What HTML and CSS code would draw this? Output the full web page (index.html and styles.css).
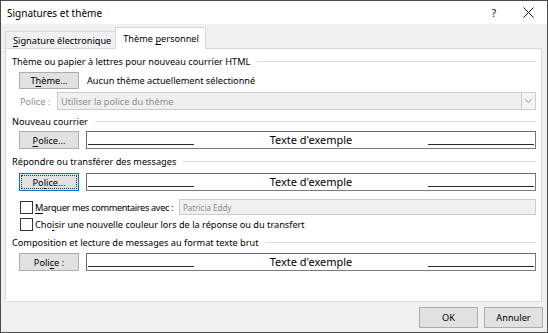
FILE: index.html
```html
<!DOCTYPE html>
<html lang="fr">

<head>
  <meta charset="UTF-8">
  <meta name="viewport" content="width=device-width, initial-scale=1.0">
  <title>Signatures et thème</title>
  <link rel="stylesheet" href="styles.css">
</head>

<body>
  <div class="window">
    <div class="titlebar">
      <span class="title">Signatures et thème</span>
      <span class="title-help">?</span>
      <span class="title-close">
        <svg width="11" height="11" viewBox="0 0 11 11">
          <path d="M0.5 0.5 L10.5 10.5 M10.5 0.5 L0.5 10.5" stroke="#111" stroke-width="1" fill="none" />
        </svg>
      </span>
    </div>

    <div class="tabs">
      <div class="tab"><span><u>S</u>ignature électronique</span></div>
      <div class="tab active"><span>Thème <u>p</u>ersonnel</span></div>
    </div>

    <div class="panel">
      <div class="heading h1"><span>Thème ou papier à lettres pour nouveau courrier HTML</span></div>
      <div class="row row-theme">
        <button class="btn"><span>T<u>h</u>ème...</span></button>
        <span class="theme-info">Aucun thème actuellement sélectionné</span>
      </div>
      <div class="row row-font">
        <span class="label-disabled">Police :</span>
        <div class="select">
          <span>Utiliser la police du thème</span>
          <span class="select-arrow">
            <svg width="7" height="4" viewBox="0 0 7 4">
              <path d="M0.5 0.5 L3.5 3.5 L6.5 0.5" stroke="#8a8a8a" stroke-width="1" fill="none" />
            </svg>
          </span>
        </div>
      </div>

      <div class="heading h2"><span>Nouveau courrier</span></div>
      <div class="row row-sample">
        <button class="btn"><span><u>P</u>olice...</span></button>
        <div class="sample">
          <span class="sample-line"></span>
          <span class="sample-text">Texte d'exemple</span>
          <span class="sample-line"></span>
        </div>
      </div>

      <div class="heading h3"><span>Répondre ou transférer des messages</span></div>
      <div class="row row-sample row-reply">
        <button class="btn focused"><span class="focus-ring"><span>Po<u>l</u>ice...</span></span></button>
        <div class="sample">
          <span class="sample-line"></span>
          <span class="sample-text">Texte d'exemple</span>
          <span class="sample-line"></span>
        </div>
      </div>

      <div class="row check-row check-mark">
        <span class="checkbox"></span>
        <span class="check-label"><u>M</u>arquer mes commentaires avec :</span>
        <div class="input-disabled">Patricia Eddy</div>
      </div>
      <div class="row check-row check-color">
        <span class="checkbox"></span>
        <span class="check-label">Cho<u>i</u>sir une nouvelle couleur lors de la réponse ou du transfert</span>
      </div>

      <div class="heading h4"><span>Composition et lecture de messages au format texte brut</span></div>
      <div class="row row-sample row-plain">
        <button class="btn"><span>Poli<u>c</u>e :</span></button>
        <div class="sample">
          <span class="sample-line"></span>
          <span class="sample-text">Texte d'exemple</span>
          <span class="sample-line"></span>
        </div>
      </div>
    </div>

    <div class="footer">
      <button class="btn btn-footer">OK</button>
      <button class="btn btn-footer">Annuler</button>
    </div>
  </div>
</body>

</html>
```

FILE: styles.css
```css
* {
  box-sizing: border-box;
}

body {
  margin: 0;
  padding: 0;
  font-family: "Noto Sans", "Open Sans", sans-serif;
  font-size: 9.2px;
  color: #000;
}

u {
  text-decoration-thickness: 1px;
  text-underline-offset: 2px;
}

.window {
  width: 548px;
  height: 333px;
  border: 1px solid #4b4b4b;
  background-color: #f0f0f0;
  display: flex;
  flex-direction: column;
}

.titlebar {
  height: 23px;
  background-color: #fff;
  display: flex;
  align-items: center;
  padding-left: 6px;
}

.title {
  flex: 1;
  font-size: 10px;
}

.title-help {
  width: 30px;
  font-size: 10px;
  text-align: center;
}

.title-close {
  width: 38px;
  display: flex;
  justify-content: center;
}

/* tab strip */
.tabs {
  height: 24px;
  display: flex;
  align-items: flex-end;
  padding-left: 4px;
}

.tab {
  height: 18px;
  padding: 0 4px 0 7px;
  border: 1px solid #d9d9d9;
  border-bottom: none;
  display: flex;
  align-items: center;
  margin-bottom: -1px;
  white-space: nowrap;
}

.tab.active {
  height: 22px;
  background-color: #fff;
  padding: 0 6px 0 7px;
  position: relative;
  z-index: 1;
  margin-left: -1px;
}

.panel {
  margin: 0 5px 0 4px;
  height: 254px;
  background-color: #fff;
  border: 1px solid #d9d9d9;
  padding: 0 5px 0 6px;
}

.heading {
  height: 14px;
  display: flex;
  align-items: center;
  white-space: nowrap;
}

.heading::after {
  content: "";
  flex: 1;
  height: 1px;
  background-color: #dcdcdc;
  margin-left: 7px;
}

.h1 { margin-top: 5px; }
.h2 { margin-top: 4px; }
.h3 { margin-top: 5px; }
.h4 { margin-top: 4px; }

.row {
  display: flex;
  align-items: center;
  padding-left: 7px;
  white-space: nowrap;
}

.btn {
  font-family: inherit;
  font-size: 9.2px;
  color: #000;
  width: 60px;
  height: 17px;
  padding: 0;
  background-color: #e1e1e1;
  border: 1px solid #adadad;
  display: flex;
  justify-content: center;
  align-items: center;
  white-space: nowrap;
}

.btn.focused {
  border-color: #0078d7;
  padding: 1px;
}

.focus-ring {
  width: 100%;
  height: 100%;
  border: 1px dotted #333;
  display: flex;
  justify-content: center;
  align-items: center;
}

.row-theme {
  margin-top: 4px;
  height: 17px;
}

.theme-info {
  margin-left: 8px;
}

.row-font {
  margin-top: 3px;
  height: 18px;
  padding-left: 8px;
}

.label-disabled {
  color: #8d8d8d;
  width: 37px;
}

.select {
  flex: 1;
  height: 18px;
  background-color: #efefef;
  border: 1px solid #cccccc;
  display: flex;
  align-items: center;
  color: #8d8d8d;
  padding-left: 3px;
}

.select span:first-child {
  flex: 1;
}

.select-arrow {
  width: 14px;
  height: 16px;
  border-left: 1px solid #cccccc;
  display: flex;
  justify-content: center;
  align-items: center;
  background-color: #f4f4f4;
}

.row-sample {
  margin-top: 3px;
  height: 18px;
}

.row-reply {
  margin-top: 5px;
}

.row-plain {
  margin-top: 4px;
}

.row-sample .btn {
  height: 18px;
}

.sample {
  flex: 1;
  margin-left: 7px;
  height: 18px;
  border: 1px solid #7a7a7a;
  border-top-color: #6a6a6a;
  border-left-color: #6a6a6a;
  background-color: #fff;
  display: flex;
  justify-content: space-between;
  align-items: flex-end;
  padding: 0 1px 3px 1px;
}

.sample-line {
  width: 106px;
  height: 1px;
  background-color: #2b2b2b;
}

.sample-text {
  font-size: 11px;
  line-height: 11px;
}

.check-row {
  padding-left: 8px;
}

.check-mark {
  margin-top: 8px;
  height: 16px;
}

.check-mark .check-label {
  letter-spacing: -0.35px;
}

.check-color {
  margin-top: 2px;
  height: 14px;
}

.checkbox {
  width: 13px;
  height: 13px;
  border: 1px solid #333;
  background-color: #fff;
  margin-right: 2px;
  flex-shrink: 0;
}

.input-disabled {
  width: 357px;
  margin-left: auto;
  height: 16px;
  background-color: #f0f0f0;
  border: 1px solid #cccccc;
  color: #8d8d8d;
  font-size: 8px;
  display: flex;
  align-items: center;
  padding-left: 3px;
}

.footer {
  display: flex;
  justify-content: flex-end;
  gap: 6px;
  padding-right: 4px;
  margin-top: 5px;
}

.btn-footer {
  width: 59px;
  height: 21px;
}
```
